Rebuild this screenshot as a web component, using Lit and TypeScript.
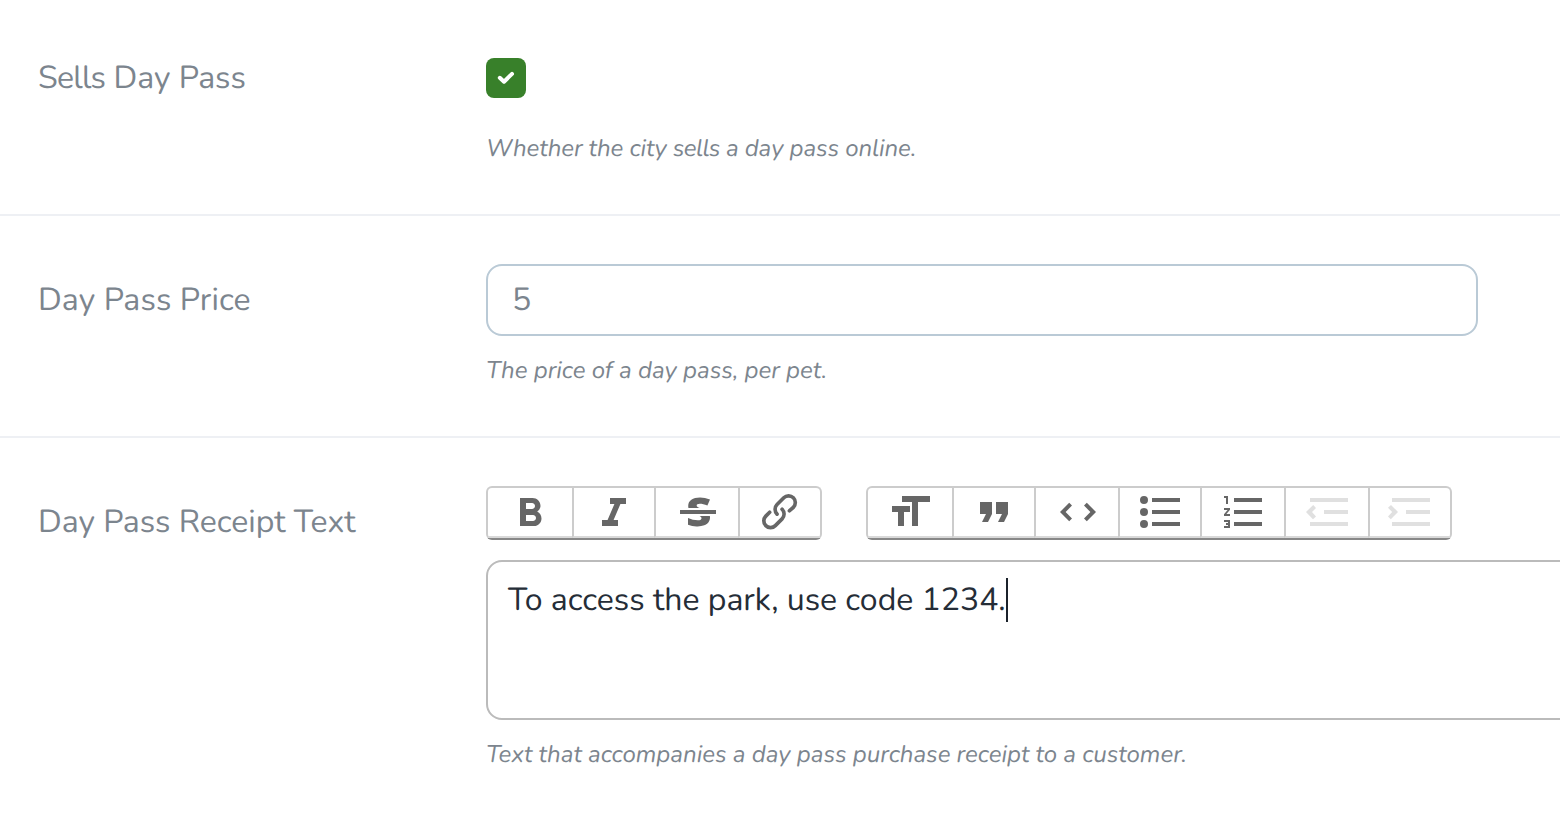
import { LitElement, html, css, svg } from "lit";
import { customElement } from "lit/decorators.js";

interface Tool {
  name: string;
  size: string;
  d: string;
  disabled?: boolean;
}

const textTools: Tool[] = [
  { name: "Bold", size: "w84", d: "M15.6 11.79c.97-.67 1.65-1.77 1.65-2.79 0-2.26-1.75-4-4-4H7v14h7.04c2.09 0 3.71-1.7 3.71-3.79 0-1.52-.86-2.82-2.15-3.42zM10 7.5h3c.83 0 1.5.67 1.5 1.5s-.67 1.5-1.5 1.5h-3v-3zm3.5 9H10v-3h3.5c.83 0 1.5.67 1.5 1.5s-.67 1.5-1.5 1.5z" },
  { name: "Italic", size: "w80", d: "M10 5v3h2.21l-3.42 8H6v3h8v-3h-2.21l3.42-8H18V5h-8z" },
  { name: "Strikethrough", size: "w82", d: "M12.73 14l.28.14c.26.15.45.3.57.44.12.14.18.3.18.5 0 .3-.15.56-.44.75-.3.2-.76.3-1.39.3A13.52 13.52 0 0 1 7 14.95v3.37a10.64 10.64 0 0 0 4.84.88c1.26 0 2.35-.19 3.28-.56.93-.37 1.64-.9 2.14-1.57s.74-1.45.74-2.32c0-.26-.02-.51-.06-.75h-5.21zm-5.5-4c-.08-.34-.12-.7-.12-1.1 0-1.29.52-2.3 1.58-3.02 1.05-.72 2.5-1.08 4.34-1.08 1.62 0 3.28.34 4.97 1l-1.3 2.93c-1.47-.6-2.73-.9-3.8-.9-.55 0-.96.08-1.2.26-.26.17-.38.38-.38.64 0 .27.16.52.48.74.17.12.53.3 1.05.53H7.23zM3 13h18v-2H3v2z" },
  { name: "Link", size: "w80", d: "M9.88 13.7a4.3 4.3 0 0 1 0-6.07l3.37-3.37a4.26 4.26 0 0 1 6.07 0 4.3 4.3 0 0 1 0 6.06l-1.96 1.72a.91.91 0 1 1-1.3-1.3l1.97-1.71a2.46 2.46 0 0 0-3.48-3.48l-3.38 3.37a2.46 2.46 0 0 0 0 3.48.91.91 0 1 1-1.3 1.3zM4.25 19.46a4.3 4.3 0 0 1 0-6.07l1.93-1.9a.91.91 0 1 1 1.3 1.3l-1.93 1.9a2.46 2.46 0 0 0 3.48 3.48l3.37-3.38c.96-.96.96-2.52 0-3.48a.91.91 0 1 1 1.3-1.3 4.3 4.3 0 0 1 0 6.07l-3.38 3.38a4.26 4.26 0 0 1-6.07 0z" },
];

const blockTools: Tool[] = [
  { name: "Heading", size: "w84", d: "M12 9v3H9v7H6v-7H3V9h9zM8 4h14v3h-6v12h-3V7H8V4z" },
  { name: "Quote", size: "w80", d: "M6 17h3l2-4V7H5v6h3zm8 0h3l2-4V7h-6v6h3z" },
  { name: "Code", size: "w82", d: "M18.2 12L15 15.2l1.4 1.4L21 12l-4.6-4.6L15 8.8l3.2 3.2zM5.8 12L9 8.8 7.6 7.4 3 12l4.6 4.6L9 15.2 5.8 12z" },
  { name: "Bullets", size: "w80", d: "M4 4a2 2 0 1 0 0 4 2 2 0 0 0 0-4zm0 6a2 2 0 1 0 0 4 2 2 0 0 0 0-4zm0 6a2 2 0 1 0 0 4 2 2 0 0 0 0-4zm4 3h14v-2H8v2zm0-6h14v-2H8v2zm0-8v2h14V5H8z" },
  { name: "Numbers", size: "w82", d: "M2 17h2v.5H3v1h1v.5H2v1h3v-4H2v1zm1-9h1V4H2v1h1v3zm-1 3h1.8L2 13.1v.9h3v-1H3.2L5 10.9V10H2v1zm5-6v2h14V5H7zm0 14h14v-2H7v2zm0-6h14v-2H7v2z" },
  { name: "Decrease level", size: "w82", disabled: true, d: "M3 19h19v-2H3v2zm7-6h12v-2H10v2zm-8.3-.3l2.8 2.9L6 14.2 4 12l2-2-1.4-1.5L1 12l.7.7zM3 5v2h19V5H3z" },
  { name: "Increase level", size: "w80", disabled: true, d: "M3 19h19v-2H3v2zm7-6h12v-2H10v2zm-6.9-1L1 14.2l1.4 1.4L6 12l-.7-.7-2.8-2.8L1 9.9 3.1 12zM3 5v2h19V5H3z" },
];

@customElement("app-root")
export class AppRoot extends LitElement {
  static styles = css`
    :host {
      display: block;
      height: 814px;
      overflow: hidden;
      background: #fff;
      color: #7c858e;
      font-family: Nunito, Lato, sans-serif;
      text-rendering: geometricPrecision;
    }
    .row {
      display: grid;
      grid-template-columns: 448px 1fr;
      box-sizing: border-box;
      padding: 48px 0 0 38px;
      white-space: nowrap;
    }
    .first { height: 216px; border-bottom: 2px solid #eef0f4; }
    .second { height: 222px; border-bottom: 2px solid #eef0f4; }
    .third { height: 376px; }
    .label { font-size: 32px; line-height: 44px; padding-top: 15px; }
    .first .label { padding-top: 9px; }
    .second .label { letter-spacing: 0.12px; }
    .help { font-size: 24px; line-height: 36px; font-style: italic; margin-top: 17px; }
    .first .help { margin-top: 33px; letter-spacing: -0.07px; }
    .tight { letter-spacing: -0.75px; }
    .help .tight { letter-spacing: -0.6px; }
    .check {
      width: 40px;
      height: 40px;
      margin-top: 10px;
      border-radius: 8px;
      background: #38802a;
    }
    .check svg { display: block; }
    .input {
      box-sizing: border-box;
      width: 992px;
      height: 72px;
      border: 2px solid #bacad6;
      border-radius: 16px;
      padding: 13px 24px 11px;
      font-size: 32px;
      line-height: 44px;
    }
    .bars { display: flex; gap: 44px; }
    .group {
      display: flex;
      box-sizing: border-box;
      height: 54px;
      border: 2px solid #ccc;
      border-bottom-color: #888;
      border-radius: 6px;
    }
    .tool {
      height: 48px;
      border-bottom: 2px solid #d9d9d9;
      color: #666;
      display: flex;
      justify-content: center;
    }
    .tool + .tool { border-left: 2px solid #ccc; }
    .tool.off { color: #e0e0e0; }
    .w84 { width: 84px; }
    .w82 { width: 80px; padding-left: 2px; }
    .w80 { width: 80px; }
    .editor {
      display: flex;
      box-sizing: border-box;
      width: 1120px;
      height: 160px;
      margin-top: 20px;
      border: 2px solid #bbb;
      border-radius: 16px;
      padding: 16px 20px;
      color: #252d37;
      font-size: 32px;
      line-height: 44px;
    }
    .typed { width: 498px; padding-top: 1px; }
    .caret { width: 2px; height: 44px; background: #1b222b; }
  `;

  private tools(list: Tool[]) {
    return html`<div class="group">
      ${list.map(
        (t) => html`<div class="tool ${t.size} ${t.disabled ? "off" : ""}" role="button" aria-label=${t.name}>
          <svg width="48" height="48" viewBox="0 0 24 24" fill="currentColor">${svg`<path d=${t.d}></path>`}</svg>
        </div>`
      )}
    </div>`;
  }

  render() {
    return html`
      <div class="row first">
        <div class="label"><span class="tight">Sells</span> Day Pass</div>
        <div>
          <div class="check">
            <svg width="40" height="40" viewBox="0 0 40 40" fill="none" stroke="#fff" stroke-width="4" stroke-linecap="round" stroke-linejoin="round"><path d="M13.8 19.8L18 23.7L26 15.9"></path></svg>
          </div>
          <div class="help">Whether the city <span class="tight">sells</span> a day pass online.</div>
        </div>
      </div>
      <div class="row second">
        <div class="label">Day Pass Price</div>
        <div>
          <div class="input">5</div>
          <div class="help">The price of a day pass, per pet.</div>
        </div>
      </div>
      <div class="row third">
        <div class="label">Day Pass Receipt Text</div>
        <div>
          <div class="bars">${this.tools(textTools)}${this.tools(blockTools)}</div>
          <div class="editor"><span class="typed">To access the park, use code 1234.</span><span class="caret"></span></div>
          <div class="help">Text that accompanies a day pass purchase receipt to a customer.</div>
        </div>
      </div>
    `;
  }
}
